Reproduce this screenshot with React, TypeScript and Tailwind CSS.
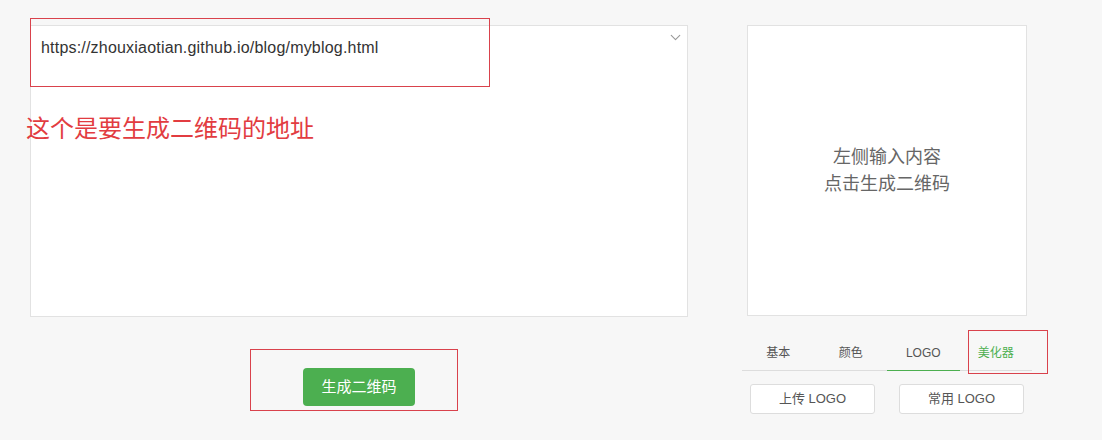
import { ChevronDown } from 'lucide-react'

const tabs = ['基本', '颜色', 'LOGO', '美化器']

export default function App() {
  return (
    <div className="relative flex min-h-[440px] bg-[#f7f7f7] pl-[30px] pt-[25px] font-['Liberation_Sans','Noto_Sans_CJK_SC',sans-serif] text-[#333]">
      {/* left column */}
      <div className="flex w-[658px] flex-col">
        <div className="relative h-[292px] border border-[#e2e2e2] bg-white">
          <div className="pl-[10px] pt-[12px] text-[16px] leading-[20px] tracking-[0.2px] text-[#333]">
            https://zhouxiaotian.github.io/blog/myblog.html
          </div>
          <ChevronDown className="absolute right-[3px] top-[3px] text-[#999]" size={17} strokeWidth={1.6} />
        </div>
        <div className="mt-[51px] flex justify-center">
          <button className="h-[38px] w-[112px] rounded-[4px] bg-[#4caf50] text-[15px] text-white">
            生成二维码
          </button>
        </div>
      </div>

      {/* right column */}
      <div className="ml-[59px] flex w-[280px] flex-col">
        <div className="flex h-[291px] flex-col items-center justify-center border border-[#e2e2e2] bg-white text-[18px] leading-[27px] text-[#666]">
          <div>左侧输入内容</div>
          <div>点击生成二维码</div>
        </div>
        <div className="-mx-[5px] mt-[18px] flex h-[37px] border-b border-[#ddd] text-[12px]">
          {tabs.map((t) => (
            <div
              key={t}
              className={
                t === 'LOGO'
                  ? 'flex flex-1 items-center justify-center -mb-px border-b border-[#4caf50] pt-[1px] text-[#555]'
                  : t === '美化器'
                    ? 'flex flex-1 items-center justify-center pt-[1px] text-[#4caf50]'
                    : 'flex flex-1 items-center justify-center pt-[1px] text-[#555]'
              }
            >
              {t}
            </div>
          ))}
        </div>
        <div className="mt-[13px] flex gap-[24px] pl-[3px]">
          <button className="h-[30px] w-[125px] rounded-[3px] border border-[#ddd] bg-white text-[13px] text-[#555]">
            上传 LOGO
          </button>
          <button className="h-[30px] w-[125px] rounded-[3px] border border-[#ddd] bg-white text-[13px] text-[#555]">
            常用 LOGO
          </button>
        </div>
      </div>

      {/* red annotations */}
      <div className="pointer-events-none absolute left-[30px] top-[18px] h-[69px] w-[460px] border border-[#d9424c]" />
      <div className="pointer-events-none absolute left-[26px] top-[114px] text-[24px] leading-[30px] text-[#e23c41]">
        这个是要生成二维码的地址
      </div>
      <div className="pointer-events-none absolute left-[250px] top-[349px] h-[62px] w-[208px] border border-[#d9424c]" />
      <div className="pointer-events-none absolute left-[968px] top-[330px] h-[44px] w-[80px] border border-[#d9424c]" />
    </div>
  )
}
